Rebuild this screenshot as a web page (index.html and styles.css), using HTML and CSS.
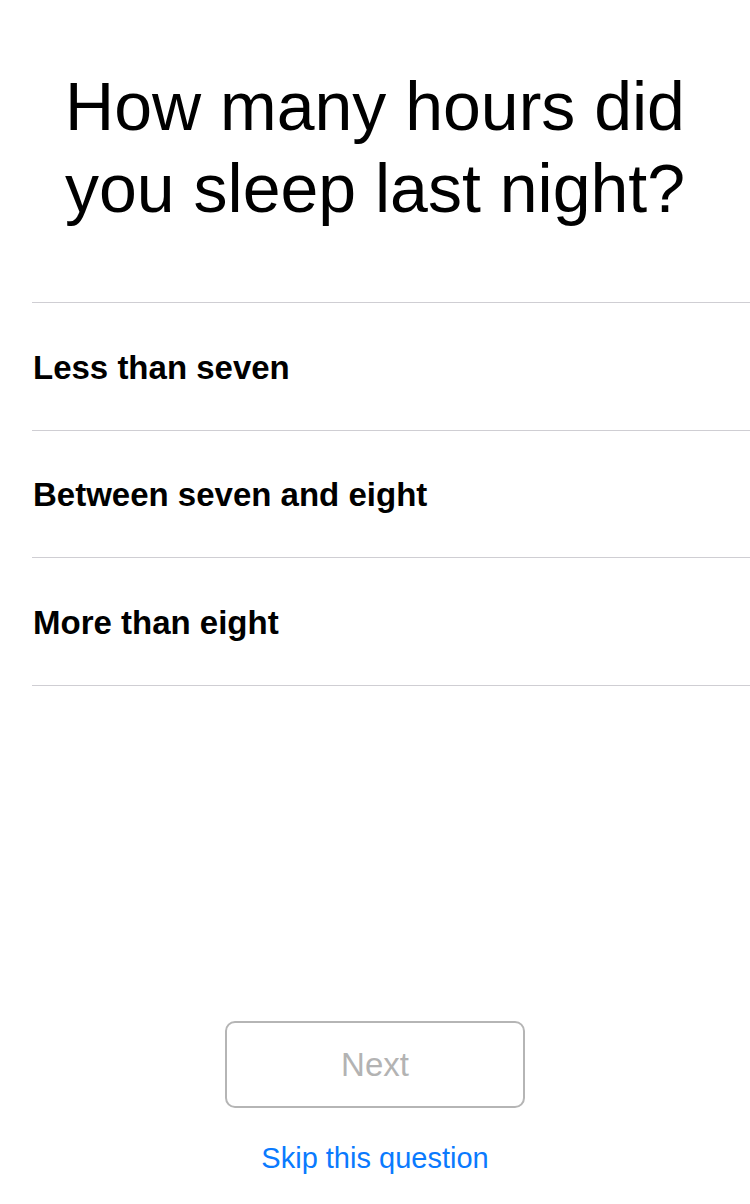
FILE: index.html
```html
<!DOCTYPE html>
<html lang="en">
<head>
<meta charset="utf-8">
<title>Sleep question</title>
<link rel="stylesheet" href="styles.css">
</head>
<body>
<main class="screen">
  <h1 class="question">How many hours did<br>you sleep last night?</h1>
  <ul class="choices">
    <li class="choice">Less than seven</li>
    <li class="choice">Between seven and eight</li>
    <li class="choice">More than eight</li>
  </ul>
  <div class="footer">
    <button class="next" type="button">Next</button>
    <a class="skip" href="#">Skip this question</a>
  </div>
</main>
</body>
</html>
```

FILE: styles.css
```css
html, body {
  margin: 0;
  padding: 0;
  background: #ffffff;
}

.screen {
  width: 750px;
  height: 1204px;
  display: flex;
  flex-direction: column;
  font-family: "Liberation Sans", Arial, sans-serif;
  color: #000;
  box-sizing: border-box;
  padding-top: 65px;
}

.question {
  margin: 0;
  font-size: 68px;
  line-height: 82px;
  font-weight: normal;
  text-align: center;
  letter-spacing: 0;
}

.choices {
  list-style: none;
  margin: 73px 0 0 32px;
  padding: 0;
  border-top: 1px solid #cfced3;
}

.choice {
  height: 127.5px;
  box-sizing: border-box;
  border-bottom: 1px solid #cfced3;
  display: flex;
  align-items: center;
  font-size: 33px;
  font-weight: bold;
  line-height: 37px;
  padding-top: 2px;
  padding-left: 1px;
}

.footer {
  margin-top: auto;
  display: flex;
  flex-direction: column;
  align-items: center;
  padding-bottom: 29px;
}

.next {
  width: 300px;
  height: 87px;
  box-sizing: border-box;
  border: 2px solid #b5b5b5;
  border-radius: 10px;
  background: #fff;
  color: #b3b3b3;
  font-family: "Liberation Sans", Arial, sans-serif;
  font-size: 33px;
  padding: 0;
}

.skip {
  margin-top: 33px;
  font-size: 29px;
  line-height: 34px;
  color: #0a7afe;
  text-decoration: none;
}
```
